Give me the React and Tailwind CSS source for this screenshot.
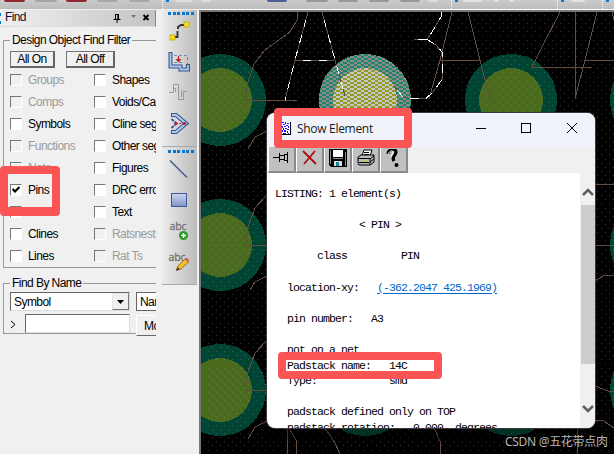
const leftFilters = [
  ["Groups", "off"],
  ["Comps", "off"],
  ["Symbols", ""],
  ["Functions", "off"],
  ["Nets", "off"],
  ["Pins", "checked"],
  ["Vias", ""],
  ["Clines", ""],
  ["Lines", ""],
];

const rightFilters = [
  ["Shapes", ""],
  ["Voids/Ca", ""],
  ["Cline seg", ""],
  ["Other seg", ""],
  ["Figures", ""],
  ["DRC erro", ""],
  ["Text", ""],
  ["Ratsnests", "off"],
  ["Rat Ts", "off"],
];

const pads = [
  [220, 100], [511, 100], [656, 100],
  [220, 245], [656, 245],
  [220, 390], [365, 390], [511, 390], [656, 390],
];

const traces = [
  "M297 12V20L290 32L265 50L254 64L248 82L245 100.500H297",
  "M308 12L295 60L285 100M295 60.5H334M322 12L335 60L345 96",
  "M452 12L440 60L429 99M468 12L480 60L490 99M440 60.5H480",
  "M560 12L532 66.500V67.500H592M575.500 12V99M597 12L585 60L575 99M585 60.500H614",
  "M441 12V17L432 32L427 39.500H414M427 39.500L436 45L442 52L443 78L433 92L426 98.500H410L402 96L394 86",
  "M612 12L614 20M267 131L255 137L248 149M267 195L255 208L248 227L245 245.500H267",
  "M267 276L255 282L250 290M267 340L255 353L248 372L245 390.500H267M267 421L255 427L248 439",
  "M595 184.500H614M595 245.500H614M595 281L604 275.500H614M595 386L608 391H614M595 420.500H603L614 428",
  "M577.500 428V454M434 428L440 441V454M287.500 428V454M289 428L296 440L297 454M325 428L335 443L340 454",
];

// staggered placement grid, snapped to whole pixels
let gridDots = "";
for (let row = 0; row < 108; row++) {
  const y = Math.round(15 + row * 4.1);
  for (let x = row % 2 ? 203.4 : 207.5; x < 614; x += 8.2) {
    gridDots += `M${Math.round(x)} ${y}h1v1h-1z`;
  }
}

const stubs = "h-[2px] rounded-b-sm shrink-0";

function TopStrip() {
  return (
    <div className="h-[9px] w-full flex items-start bg-gradient-to-b from-[#cbcbcb] to-[#bdbdbd] shrink-0 overflow-hidden">
      <i className={stubs + " ml-1 w-[21px] bg-[#8e2934]"} />
      <i className={stubs + " ml-[10px] w-[22px] bg-[#a5a5a5]"} />
      <i className={stubs + " ml-[9px] w-[21px] bg-[#8e2934]"} />
      <i className={stubs + " ml-[10px] w-[21px] bg-[#a8a8a8]"} />
      <i className={stubs + " ml-[11px] w-[21px] bg-[#a8a8a8]"} />
      <Separator className="ml-[12px]" />
      <i className={stubs + " ml-[6px] w-[18px] bg-[#dedede]"} />
      <i className={stubs + " ml-[8px] w-[10px] bg-[#dedede]"} />
      <i className={stubs + " ml-[56px] w-[20px] bg-[#4e6196]"} />
      <i className={stubs + " ml-[19px] w-[22px] bg-[#989898]"} />
      <i className={stubs + " ml-[10px] w-[20px] bg-[#989898]"} />
      <i className={stubs + " ml-[11px] w-[20px] bg-[#989898]"} />
      <i className={stubs + " ml-[11px] w-[20px] bg-[#989898]"} />
      <i className={stubs + " ml-[8px] w-[10px] bg-[#ddd]"} />
      <Separator className="ml-[13px]" />
      <i className={stubs + " ml-[5px] w-[19px] bg-[#e4e4e4]"} />
      <i className={stubs + " ml-[12px] w-[5px] bg-[#e4e4e4]"} />
      <i className={stubs + " ml-[10px] w-[5px] bg-[#e4e4e4]"} />
      <Separator className="ml-[43px]" />
      <i className={stubs + " ml-[7px] w-[14px] bg-[#e4e4e4]"} />
      <Separator className="ml-[17px]" />
    </div>
  );
}

function Separator({ className }) {
  return (
    <span className={className + " flex w-[7px] h-[9px] shrink-0 gap-[3px]"}>
      <i className="w-0 h-[9px] border-l border-dotted border-white" />
      <i className="w-[3px] h-[2px] bg-[#0078d7]" />
    </span>
  );
}

function Label({ children, off }) {
  return (
    <span className={"text-[12px] leading-[16px] tracking-[-0.55px] whitespace-nowrap " + (off ? "text-[#9b9b9b]" : "text-black")}>
      {children}
    </span>
  );
}

function FilterColumn({ items, className }) {
  return (
    <div className={"flex flex-col shrink-0 " + className}>
      {items.map(([name, state]) => (
        <div key={name} className="h-[22px] flex items-center gap-[6px]">
          <span className={"w-[12px] h-[12px] shrink-0 border border-t-[#777] border-l-[#777] border-b-[#fff] border-r-[#fff] flex items-center justify-center " + (state === "off" ? "bg-[#f0f0f0]" : "bg-white")}>
            {state === "checked" && (
              <svg width="8" height="8" viewBox="0 0 8 8">
                <path d="M0.500 3L3 5.500L7.500 1" fill="none" stroke="#000" strokeWidth="2.200" />
              </svg>
            )}
          </span>
          <Label off={state === "off"}>{name}</Label>
        </div>
      ))}
    </div>
  );
}

function PushButton({ children, className }) {
  return (
    <span className={"h-[17px] flex items-center justify-center bg-[#f0f0f0] border border-[#777] border-r-2 border-b-2 border-r-[#666] border-b-[#666] " + className}>
      <Label>{children}</Label>
    </span>
  );
}

function FindPanel() {
  return (
    <div className="w-[156px] overflow-hidden flex flex-col shrink-0">
      <div className="h-[17px] w-[156px] flex items-center bg-gradient-to-r from-[#f0f0f0] to-[#c4c4c4] border-r border-b border-r-[#888] border-b-[#ddd] shrink-0">
        <span className="w-[1px] h-[11px] flex flex-col justify-between">
          <i className="h-[3px] bg-[#0078d7]" />
          <i className="h-[3px] bg-[#0078d7]" />
        </span>
        <span className="ml-1 mt-[-2px] text-[12px] leading-[14px] tracking-[-0.6px] text-[#101030] grow">Find</span>
        <svg width="44" height="14" viewBox="0 0 44 14">
          <path d="M4 3.500H8M4.500 3V9M7.500 3V9M6.800 3V9M2.500 8.500H9.500M6 8.500V12" fill="none" stroke="#000" />
          <path d="M20 4H25L22.500 7Z" fill="#777" />
          <path d="M32.500 4L37.500 9M37.500 4L32.500 9" stroke="#000" strokeWidth="1.800" />
        </svg>
      </div>

      <fieldset className="ml-[3px] mt-[5px] w-[190px] h-[236px] border border-[#999] shrink-0">
        <legend className="ml-[6px] px-[2px] h-[16px] flex"><Label>Design Object Find Filter</Label></legend>
        <div className="flex ml-[6px] mt-[3px] gap-[11px]">
          <PushButton className="w-[45px]">All On</PushButton>
          <PushButton className="w-[49px]">All Off</PushButton>
        </div>
        <div className="flex ml-[6px] mt-[1px]">
          <FilterColumn items={leftFilters} className="w-[84px]" />
          <FilterColumn items={rightFilters} className="w-[100px]" />
        </div>
      </fieldset>

      <fieldset className="ml-[3px] mt-[7px] w-[190px] h-[59px] border border-[#999] shrink-0">
        <legend className="ml-[6px] px-[2px] h-[16px] flex"><Label>Find By Name</Label></legend>
        <div className="flex ml-[6px] mt-[1px] gap-[6px]">
          <span className="w-[120px] h-[19px] bg-white border border-t-[#666] border-l-[#666] border-b-[#ddd] border-r-[#ddd] flex items-center justify-between pl-[3px] shrink-0">
            <Label>Symbol</Label>
            <span className="w-[17px] h-[17px] bg-[#f0f0f0] border border-[#e4e4e4] border-r-[#777] border-b-[#777] flex items-center justify-center">
              <svg width="7" height="4" viewBox="0 0 7 4"><path d="M0 0H7L3.500 4Z" /></svg>
            </span>
          </span>
          <span className="w-[60px] h-[19px] bg-white border border-[#666] flex items-center pl-[3px]">
            <Label>Name</Label>
          </span>
        </div>
        <div className="flex ml-[6px] mt-[3px]">
          <span className="w-[15px] h-[20px] flex items-center">
            <svg width="8" height="9" viewBox="0 0 8 9"><path d="M1 1L5 4.500L1 8" fill="none" stroke="#000" /></svg>
          </span>
          <span className="w-[105px] h-[19px] bg-white border border-t-[#666] border-l-[#666] border-b-[#ddd] border-r-[#ddd] shrink-0" />
          <span className="ml-[6px] mt-[1px] w-[60px] h-[21px] bg-[#f0f0f0] border border-white border-b-[#666] flex items-center pl-[7px]">
            <Label>More</Label>
          </span>
        </div>
      </fieldset>
    </div>
  );
}

function Grip() {
  return (
    <div className="flex gap-[1.600px] h-[3px] w-[24px] ml-[6px] shrink-0">
      {[0, 1, 2, 3, 4, 5].map((i) => (
        <i key={i} className="w-[3px] h-[3px] bg-[#0078d7] shrink-0" />
      ))}
    </div>
  );
}

function SideToolbar() {
  return (
    <div className="w-[35px] ml-[6px] flex flex-col shrink-0">
      <div className="h-[137px] pt-[2px] bg-gradient-to-r from-[#ececec] to-[#bcbcbc] border-b border-[#aaa]">
        <Grip />
        <svg width="35" height="128" viewBox="162 15 35 128">
          <path d="M174 37H177.500V31M178 29V27L181 25H184" fill="none" stroke="#333" strokeWidth="1.900" />
          <rect x="170" y="35" width="5" height="5" fill="#f5df20" stroke="#b7a100" strokeWidth=".7" />
          <rect x="184" y="22" width="5" height="5" fill="#f5df20" stroke="#b7a100" strokeWidth=".7" />
          <path d="M170.500 52V66.500H180.500V69.500H188V64" fill="none" stroke="#375687" strokeWidth="4" />
          <path d="M170.500 53V66.500H180.500V69.500H188V65" fill="none" stroke="#afc7ef" strokeWidth="1.800" />
          <path d="M174 55.500H187.500V64M174 62.500H184" fill="none" stroke="#7188b5" strokeDasharray="3 2" />
          <path d="M178.500 56V61" stroke="#b92630" strokeWidth="1.300" />
          <path d="M175.500 59H181.500L178.500 62.500Z" fill="#b92630" />
          <path d="M169 92.500H173.500V84.500H178.500V92M173.500 92V88.500H175.500V92M178.500 92V99.500H183.500V91.500H187M181.500 90V97" fill="none" stroke="#999" />
          <path d="M171 115H176L186 123.500L176 132H171" fill="none" stroke="#34558e" strokeWidth="4.200" />
          <path d="M172 115H176L186 123.500L176 132H172" fill="none" stroke="#b6cdf1" strokeWidth="2" />
          <path d="M171.500 119L176 123M171.500 128L176 124" fill="none" stroke="#34558e" strokeWidth="1.800" strokeDasharray="3 1" />
          <path d="M176 123.500H184" stroke="#a44" strokeDasharray="2 1" />
          <circle cx="176" cy="123.500" r="1.600" fill="#b02030" />
          <circle cx="184.500" cy="123.500" r="1.600" fill="#b02030" />
        </svg>
      </div>
      <div className="h-[138px] pt-[3px] bg-gradient-to-r from-[#ececec] to-[#bcbcbc] border-b border-[#aaa]">
        <Grip />
        <svg width="35" height="130" viewBox="162 153 35 130">
          <path d="M170 160.500L187 177.500" stroke="#4a628f" strokeWidth="1.600" />
          <defs>
            <linearGradient id="rectFill" x2="0" y2="1"><stop stopColor="#ccd8f1" /><stop offset="1" stopColor="#7e94c7" /></linearGradient>
          </defs>
          <rect x="171.500" y="193.500" width="15" height="13" fill="url(#rectFill)" stroke="#405991" />
          <text x="169.500" y="230" fontFamily="Open Sans, sans-serif" fontSize="10.500" textLength="17" fill="#717171" stroke="#717171" strokeWidth=".3">abc</text>
          <circle cx="183.500" cy="235.500" r="4.500" fill="#249b24" />
          <path d="M183.500 233V238M181 235.500H186" stroke="#fff" strokeWidth="1.500" />
          <text x="168.500" y="261" fontFamily="Open Sans, sans-serif" fontSize="10.500" textLength="17" fill="#717171" stroke="#717171" strokeWidth=".3">abc</text>
          <path d="M176.500 270L178 266L185 259L188.500 262L181 269Z" fill="#f3c12b" stroke="#98651c" strokeWidth=".9" />
          <path d="M184.500 259L186.500 257.500L189 260L188 262.500Z" fill="#d95c55" />
          <path d="M176 271L177.500 267L180 269.500Z" fill="#5a3535" />
        </svg>
      </div>
    </div>
  );
}

function Board() {
  return (
    <svg width="413" height="442" viewBox="201 12 413 442" className="block bg-black" shapeRendering="crispEdges">
      <defs>
        <pattern id="picked" width="7" height="4" patternUnits="userSpaceOnUse">
          <path d="M0 0H4V2H0ZM4 2H7V4H4Z" fill="#fff" />
        </pattern>
        <mask id="pickedMask"><rect x="310" y="50" width="110" height="100" fill="url(#picked)" /></mask>
      </defs>
      {pads.map(([x, y]) => (
        <g key={x + "-" + y}>
          <circle cx={x} cy={y} r="46" fill="#004433" />
          <circle cx={x} cy={y} r="32" fill="#4a6a1d" />
        </g>
      ))}
      <path d={gridDots} fill="#bbb" fillOpacity=".28" />
      <circle cx="365" cy="100" r="46" fill="#208468" />
      <circle cx="365" cy="100" r="32" fill="#939b27" />
      <g mask="url(#pickedMask)">
        <circle cx="365" cy="100" r="46" fill="#8b8b8b" />
        <circle cx="365" cy="100" r="32" fill="#c5c5c5" />
      </g>
      <path d={traces.join("")} fill="none" stroke="#624d40" strokeWidth="1" />
      <path d={traces[1]} fill="none" stroke="#fff" strokeDasharray="8 8" strokeDashoffset="8" />
      <path d={traces[4]} fill="none" stroke="#fff" strokeDasharray="9 7" />
      {/* shadow under the floating window */}
      <rect x="264" y="428" width="334" height="12" fill="#000" fillOpacity=".3" />
    </svg>
  );
}

const toolIcons = [
  <path key="pin" d="M0 8.500H6M6.500 4V13M7 6.500H11M7 10.500H11M11.500 5V12M14.500 3V14M11 5.500H14M11 11.500H14" fill="none" stroke="#000" />,
  <path key="close" d="M2 2L15 15M14 2L3 15" fill="none" stroke="#a51010" strokeWidth="1.800" />,
  <g key="save">
    <path d="M0 0H18V18H2L0 16Z" />
    <path d="M4 1H14V8H4Z" fill="#fff" />
    <path d="M1.500 1V15M16.500 3V17M4 9.500H14" stroke="#8b8b8b" />
    <path d="M5 12H13V17H5Z" fill="#ddd" />
    <path d="M7 13H10V17H7Z" fill="#168494" />
  </g>,
  <g key="print" stroke="#000">
    <path d="M5 7L7 1H15L13 7Z" fill="#fff" />
    <path d="M7 3.500H12M7 5.500H12" />
    <path d="M1 8L4 6H17V13L13 16H2L1 14Z" fill="#bbb" />
    <path d="M1 9.500H13V16M2 13.500H12M13 10L17 7M13 13L17 10" fill="none" />
    <path d="M6 12H10" stroke="#d3c900" />
  </g>,
  <g key="help">
    <path d="M3 5C3 0 11 -1 11 3C11 7 6 7 9 12" fill="none" stroke="#000" strokeWidth="3.200" />
    <path d="M3 5C5 1 9 1 8 4L6 8" fill="none" stroke="#fff" />
    <circle cx="11.500" cy="16" r="2" />
  </g>,
];

const listing = `LISTING: 1 element(s)

              < PIN >

       class         PIN

  location-xy:   `;

const listingRest = `

  pin number:   A3

  not on a net
  Padstack name:   14C
  Type:            smd

  padstack defined only on TOP
  padstack rotation:   0.000  degrees`;

function ShowElement() {
  return (
    <div className="absolute left-[267px] top-[113px] w-[328px] h-[315px] rounded-lg overflow-hidden bg-white flex flex-col shadow-[0_0_0_1px_#3a3a3a]">
      <div className="h-[34px] bg-[#f0f3f9] flex items-center shrink-0">
        <svg className="ml-[13px] mt-[-3px]" width="11" height="13" viewBox="0 0 11 13" shapeRendering="crispEdges">
          <rect width="10" height="13" fill="#fff" />
          <path d="M2 0h2v1h-2zM5 0h1v2h-1zM7 1h2v1h-2zM3 2h2v1h-2zM6 3h2v1h-2zM2 4h1v2h-1zM4 4h2v1h-2zM8 4h1v2h-1zM5 6h2v1h-2zM3 6h1v2h-1zM7 7h2v1h-2zM2 8h1v2h-1zM4 8h2v2h-2zM7 9h1v2h-1zM3 11h3v1h-3zM8 11h1v1h-1z" fill="#1111ee" />
          <path d="M10.500 0V13M2 12.500H10" stroke="#000" />
        </svg>
        <span className="ml-[6px] mt-[-3px] font-['Open_Sans',sans-serif] text-[12px] tracking-[-0.3px] text-[#1b1b1b] grow">Show Element</span>
        <svg className="mr-[16px] mt-[-6px]" width="104" height="13" viewBox="0 0 104 13">
          <path d="M1 7.500H11" stroke="#000" />
          <rect x="46.500" y="2.500" width="9" height="9" fill="none" stroke="#000" />
          <path d="M92 2L102 12M102 2L92 12" stroke="#000" />
        </svg>
      </div>
      <div className="h-[26px] bg-[#f0f0f0] flex shrink-0 pl-[1px]">
        {toolIcons.map((icon) => (
          <span key={icon.key} className="w-[28px] h-[26px] bg-[#c0c0c0] border-r-2 border-b-2 border-r-[#8a8a8a] border-b-[#8a8a8a] border-l border-l-white flex items-center justify-center">
            <svg className="mt-[-2px]" width="18" height="18" viewBox="0 0 18 18">{icon}</svg>
          </span>
        ))}
      </div>
      <div className="flex grow min-h-0">
        <pre className="grow overflow-hidden pl-[8px] pt-[13px] font-['Liberation_Mono',monospace] text-[11.5px] leading-[15.6px] tracking-[-0.9px] text-black">
          {listing}
          <span className="text-[#0066cc] underline underline-offset-2">(-362.2047 425.1969)</span>
          {listingRest}
        </pre>
        <div className="w-[15px] bg-[#f0f0f0] flex flex-col items-center pl-[1px] shrink-0">
          <svg className="h-[32px] shrink-0" width="12" height="32" viewBox="0 0 12 32">
            <path d="M1 22L6 17L11 22" fill="none" stroke="#606060" strokeWidth="2.500" />
          </svg>
          <div className="h-[159px] w-[14px] bg-[#cdcdcd] shrink-0" />
          <svg className="shrink-0" width="12" height="64" viewBox="0 0 12 64">
            <path d="M1 42L6 47L11 42" fill="none" stroke="#606060" strokeWidth="2.500" />
          </svg>
        </div>
      </div>
    </div>
  );
}

export default function App() {
  return (
    <div className="relative w-[614px] h-[454px] overflow-hidden bg-[#f0f0f0] flex flex-col font-['Liberation_Sans',sans-serif]">
      <TopStrip />
      <div className="flex h-[445px]">
        <div className="flex w-[199px] pt-[1px] shrink-0">
          <FindPanel />
          <SideToolbar />
        </div>
        <div className="w-[415px] border-t border-t-white shrink-0">
          <div className="border-t-2 border-l-2 border-[#777]">
            <Board />
          </div>
        </div>
      </div>

      <ShowElement />

      {/* highlight boxes */}
      <div className="absolute left-0 top-[166px] w-[60px] h-[50px] border-8 border-b-[9px] border-[#fb5454] rounded" />
      <div className="absolute left-[274px] top-[108px] w-[138px] h-[40px] border-8 border-[#fb5454] rounded" />
      <div className="absolute left-[278px] top-[352px] w-[164px] h-[27px] border-8 border-[#fb5454] rounded" />

      <span className="absolute left-[505px] top-[434px] text-[12px] leading-[16px] tracking-[-0.3px] whitespace-nowrap text-[#b5b5b5] font-['Noto_Sans','Noto_Sans_CJK_SC',sans-serif]">
        CSDN @五花带点肉
      </span>
    </div>
  );
}
